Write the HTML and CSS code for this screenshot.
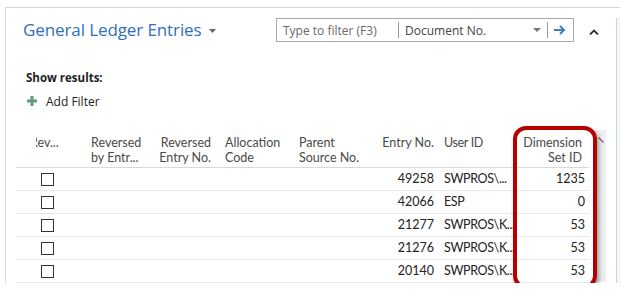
FILE: index.html
```html
<!DOCTYPE html>
<html lang="en">
<head>
  <meta charset="UTF-8">
  <meta name="viewport" content="width=device-width, initial-scale=1">
  <title>General Ledger Entries</title>
  <link rel="stylesheet" href="styles.css">
</head>
<body>
  <div class="page">
    <div class="main">
      <!-- title and search -->
      <div class="topbar">
        <h1 class="title">General Ledger Entries
          <svg class="caret" width="7" height="4" viewBox="0 0 7 4"><path d="M0 0h7L3.5 4z" fill="#666"/></svg>
        </h1>
        <div class="search">
          <span class="search-text">Type to filter (F3)</span>
          <span class="sep"></span>
          <span class="search-field">Document No.</span>
          <svg class="field-caret" width="8" height="4" viewBox="0 0 8 4"><path d="M0 0h8L4 4z" fill="#777"/></svg>
          <span class="sep"></span>
          <svg class="go" width="12" height="10" viewBox="0 0 12 10"><path d="M0 5h10M6 1l4 4-4 4" fill="none" stroke="#3b7fc4" stroke-width="2"/></svg>
        </div>
        <button class="collapse" type="button">
          <svg width="10" height="6" viewBox="0 0 10 6"><path d="M1 5.5L5 1.5 9 5.5" fill="none" stroke="#333" stroke-width="1.8"/></svg>
        </button>
      </div>

      <!-- filters -->
      <div class="filters">
        <div class="show">Show results:</div>
        <div class="add-filter">
          <svg width="10" height="10" viewBox="0 0 10 10"><path d="M5 0v10M0 5h10" stroke="#5e9c7c" stroke-width="3"/></svg>
          <span>Add Filter</span>
        </div>
      </div>

      <!-- grid -->
      <div class="grid-wrap">
        <div class="grid">
          <div class="row head">
            <div class="cell clip"><span>Rev...</span></div>
            <div class="cell c2">Reversed<br>by Entr...</div>
            <div class="cell c3">Reversed<br>Entry No.</div>
            <div class="cell c4">Allocation<br>Code</div>
            <div class="cell c5">Parent<br>Source No.</div>
            <div class="cell c6">Entry No.</div>
            <div class="cell c7">User ID</div>
            <div class="cell c8">Dimension<br>Set ID</div>
          </div>
          <div class="row">
            <div class="cell check"><span class="box"></span></div>
            <div class="cell"></div><div class="cell"></div><div class="cell"></div><div class="cell"></div>
            <div class="cell c6">49258</div>
            <div class="cell c7">SWPROS\...</div>
            <div class="cell c8">1235</div>
          </div>
          <div class="row">
            <div class="cell check"><span class="box"></span></div>
            <div class="cell"></div><div class="cell"></div><div class="cell"></div><div class="cell"></div>
            <div class="cell c6">42066</div>
            <div class="cell c7">ESP</div>
            <div class="cell c8">0</div>
          </div>
          <div class="row">
            <div class="cell check"><span class="box"></span></div>
            <div class="cell"></div><div class="cell"></div><div class="cell"></div><div class="cell"></div>
            <div class="cell c6">21277</div>
            <div class="cell c7">SWPROS\K...</div>
            <div class="cell c8">53</div>
          </div>
          <div class="row">
            <div class="cell check"><span class="box"></span></div>
            <div class="cell"></div><div class="cell"></div><div class="cell"></div><div class="cell"></div>
            <div class="cell c6">21276</div>
            <div class="cell c7">SWPROS\K...</div>
            <div class="cell c8">53</div>
          </div>
          <div class="row">
            <div class="cell check"><span class="box"></span></div>
            <div class="cell"></div><div class="cell"></div><div class="cell"></div><div class="cell"></div>
            <div class="cell c6">20140</div>
            <div class="cell c7">SWPROS\K...</div>
            <div class="cell c8">53</div>
          </div>
        </div>
        <div class="vscroll">
          <svg width="6" height="6" viewBox="0 0 6 6"><path d="M0.5 0.5L5.5 5.5" stroke="#777" stroke-width="1.5"/></svg>
        </div>
        <!-- annotation round Dimension Set ID -->
        <div class="highlight"></div>
      </div>
    </div>
    <div class="side"></div>
  </div>
</body>
</html>
```

FILE: styles.css
```css
body { margin: 0; background: #fff; font-family: "Open Sans", "Noto Sans", sans-serif; font-size: 12px; color: #222; }

.page { display: flex; margin: 7px 0 0 5px; height: 275px; border-top: 1px solid #d8d8d8; border-left: 1px solid #d8d8d8; }
.main { flex: 1; min-width: 0; }
.side { width: 3px; margin-top: 10px; border-left: 1px solid #c8d6e4; background: #f3f6fa; }

/* top bar */
.topbar { display: flex; align-items: center; padding: 10px 10px 0 17px; height: 24px; }
.title { flex: 1; margin: 0; font-size: 17px; font-weight: normal; color: #2f6fbd; line-height: 24px; white-space: nowrap; letter-spacing: -0.1px; }
.caret { margin-left: 3px; vertical-align: 3px; }
.search { display: flex; align-items: center; width: 296px; height: 22px; border: 1px solid #a9a9a9; color: #444; }
.search-text { width: 115px; padding-left: 6px; color: #6a6a6a; }
.sep { width: 1px; height: 16px; background: #9a9a9a; }
.search-field { flex: 1; padding-left: 6px; }
.field-caret { margin-right: 6px; }
.go { margin: 0 7px 0 6px; }
.collapse { width: 24px; height: 24px; margin-left: 8px; padding: 0; border: none; background: none; }

/* filters */
.filters { padding: 28px 0 0 20px; }
.show { font-weight: bold; font-size: 11.5px; line-height: 16px; color: #222; }
.add-filter { display: flex; align-items: center; margin-top: 7px; height: 16px; padding-left: 1px; }
.add-filter span { margin-left: 9px; }

/* grid */
.grid-wrap { position: relative; display: flex; margin-top: 19px; padding-left: 10px; }
.grid { width: 573px; font-family: Lato, "Open Sans", sans-serif; font-size: 12.5px; }
.row { display: grid; grid-template-columns: 62px 72px 67px 75px 78px 70px 73px 76px; height: 22px; border-bottom: 1px solid #e8e8e8; line-height: 22px; }
.row.head { height: 39px; border-bottom-color: #d9d9d9; line-height: 15px; color: #4a4a4a; }
.head .cell { padding-top: 7px; }
.cell { white-space: nowrap; overflow: hidden; }
.clip { margin-left: 20px; }
.clip span { margin-left: -6px; }
.check { display: flex; align-items: center; justify-content: center; padding-right: 0; }
.box { width: 11px; height: 11px; border: 1px solid #333; margin-left: 1px; }
.c2 { padding-left: 13px; }
.c3 { text-align: right; padding-right: 6px; }
.c4 { padding-left: 8px; }
.c5 { padding-left: 7px; }
.c6 { text-align: right; padding-right: 6px; }
.c7 { padding-left: 4px; letter-spacing: -0.35px; overflow: visible; }
.c8 { text-align: right; padding-right: 4px; }
.head .c8 { padding-right: 7px; }
.vscroll { width: 11px; margin: 2px 0 1px 6px; background: #eeeeee; }
.vscroll svg { display: block; margin: 7px 0 0 3px; }
.highlight { position: absolute; left: 507px; top: -2px; width: 76px; height: 155px; border: 4px solid #b50000; border-radius: 13px; box-shadow: 2px 3px 4px rgba(0, 0, 0, 0.35); }
```
